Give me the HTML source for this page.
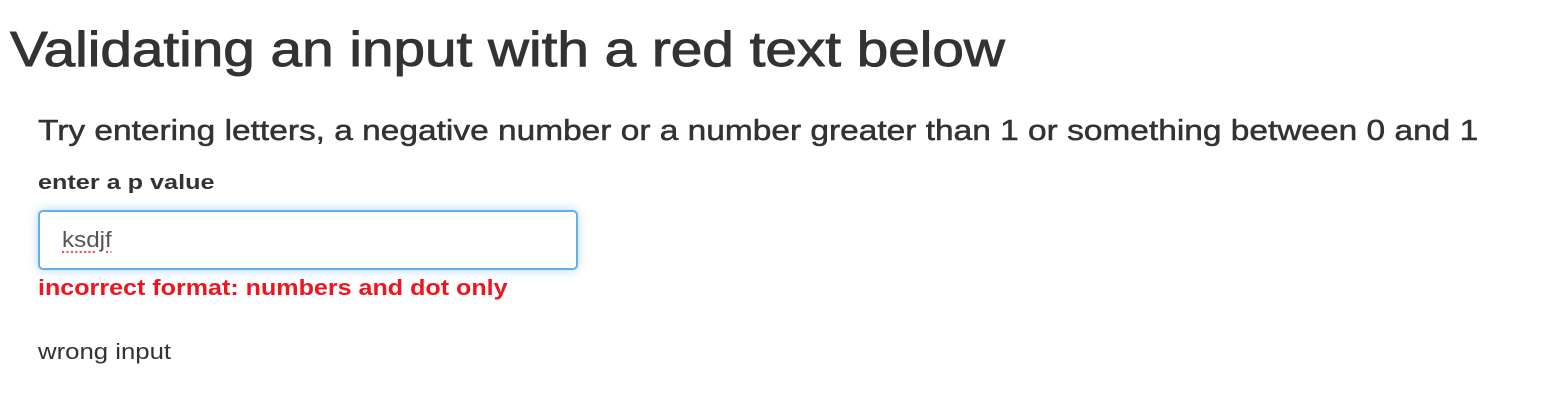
<!DOCTYPE html>
<html><head><style>
body{margin:0;width:1542px;height:420px;background:#fff;font-family:"Liberation Sans",Arial,sans-serif;color:#333;position:relative;overflow:hidden}
div{position:absolute;white-space:nowrap;transform-origin:0 0}
#t{left:10px;top:18px;font-size:49px;line-height:64px;transform:scaleX(1.157);-webkit-text-stroke:0.9px #333}
#s{left:38px;top:113px;font-size:28.5px;line-height:36px;transform:scaleX(1.174);-webkit-text-stroke:0.5px #333}
#l{left:38px;top:169px;font-size:20px;font-weight:bold;line-height:28px;transform:scaleX(1.26)}
#i{left:38px;top:210px;width:536px;height:56px;border:2px solid #66afe9;border-radius:5px;box-shadow:0 0 10px rgba(102,175,233,.5)}
#v{left:62px;top:226px;font-size:22px;line-height:28px;color:#555;text-decoration:underline dotted #e55;text-underline-offset:4px;transform:scaleX(1.1)}
#e{left:38px;top:273px;font-size:22px;font-weight:bold;color:#f0141e;line-height:30px;transform:scaleX(1.14)}
#w{left:38px;top:337px;font-size:22px;line-height:30px;transform:scaleX(1.17)}
</style></head><body>
<div id="t">Validating an input with a red text below</div>
<div id="s">Try entering letters, a negative number or a number greater than 1 or something between 0 and 1</div>
<div id="l">enter a p value</div>
<div id="i"></div>
<div id="v">ksdjf</div>
<div id="e">incorrect format: numbers and dot only</div>
<div id="w">wrong input</div>
</body></html>
